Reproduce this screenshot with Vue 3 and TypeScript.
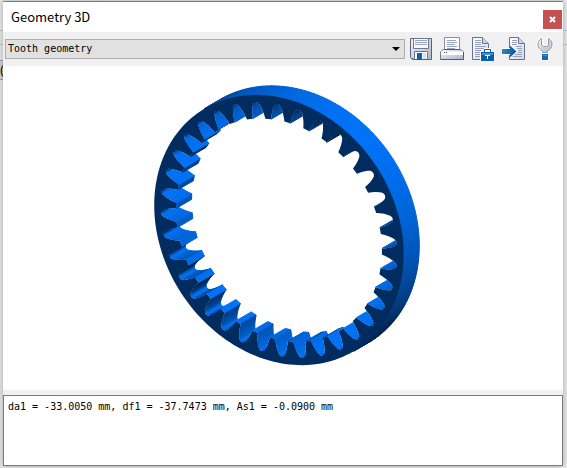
<script setup lang="ts">
import { ref } from 'vue'

interface Point { x: number; y: number }
interface Facet { points: string; fill: string; order: number }

const view = ref('Tooth geometry')
const views = ['Tooth geometry', 'Tooth system']
const report = ref('da1 = -33.0050 mm, df1 = -37.7473 mm, As1 = -0.0900 mm')

// Ring gear seen along a tilted axis: `major` and `minor` span the face plane,
// `depth` is the projected face width.
const centre: Point = { x: 276, y: 164 }
const major: Point = { x: 0.549, y: 0.836 }
const minor: Point = { x: 0.683, y: -0.449 }
const depth: Point = { x: 15.5, y: -9 }
const teeth = 35
const outerRadius = 142.4
const rootRadius = 134.8
const tipRadius = 117.5
const rad = Math.PI / 180

function project(angle: number, radius: number): Point {
  const a = angle * rad
  const c = Math.cos(a) * radius
  const s = Math.sin(a) * radius
  return { x: centre.x + c * major.x + s * minor.x, y: centre.y + c * major.y + s * minor.y }
}

function shade(normal: number): string {
  const light = Math.pow(Math.max(0, Math.cos((normal - 105) * rad)), 0.85)
  return `rgb(0, ${Math.round(38 + 76 * light)}, ${Math.round(82 + 164 * light)})`
}

function text(p: Point): string {
  return `${p.x.toFixed(2)},${p.y.toFixed(2)}`
}

function outline(points: Point[]): string {
  return `M${points.map(text).join('L')}Z`
}

// Builds the walls swept from the front outline; `side` selects outer or inner surfaces.
function walls(angles: number[], radii: number[], side: number): Facet[] {
  const result: Facet[] = []
  for (let i = 0; i < angles.length; i++) {
    const j = (i + 1) % angles.length
    const a = project(angles[i], radii[i])
    const b = project(angles[j], radii[j])
    const facing = ((b.x - a.x) * depth.y - (b.y - a.y) * depth.x) * side
    if (facing <= 0) continue
    const dx = radii[j] * Math.cos(angles[j] * rad) - radii[i] * Math.cos(angles[i] * rad)
    const dy = radii[j] * Math.sin(angles[j] * rad) - radii[i] * Math.sin(angles[i] * rad)
    const normal = Math.atan2(-dx * side, dy * side) / rad
    const quad = [a, b, { x: b.x + depth.x, y: b.y + depth.y }, { x: a.x + depth.x, y: a.y + depth.y }]
    result.push({
      points: quad.map(text).join(' '),
      fill: shade(normal),
      order: (a.x + b.x) * depth.x + (a.y + b.y) * depth.y
    })
  }
  return result.sort((p, q) => p.order - q.order)
}

const rimAngles = Array.from({ length: 180 }, (_, i) => i * 2)
const rimRadii = rimAngles.map(() => outerRadius)

const gap: [number, number][] = [
  [-0.35, 0], [-0.31, 0.25], [-0.26, 0.5], [-0.19, 0.75], [-0.13, 0.91], [-0.06, 0.98],
  [0, 1], [0.06, 0.98], [0.13, 0.91], [0.19, 0.75], [0.26, 0.5], [0.31, 0.25], [0.35, 0]
]
const toothAngles: number[] = []
const toothRadii: number[] = []
for (let k = 0; k < teeth; k++) {
  for (const [offset, height] of gap) {
    const angle = -24.8 + ((k + offset) * 360) / teeth
    toothAngles.push(angle - 2.8 * Math.cos(angle * rad))
    toothRadii.push(tipRadius + (rootRadius - tipRadius) * height)
  }
}

const rim = walls(rimAngles, rimRadii, 1)
const flanks = walls(toothAngles, toothRadii, -1)
const rimPath = outline(rimAngles.map((a) => project(a, outerRadius)))
const borePath = outline(toothAngles.map((a, i) => project(a, toothRadii[i])))
</script>

<template>
  <div class="desktop">
    <div class="behind" aria-hidden="true"></div>
    <div class="behind-field" aria-hidden="true">(</div>
    <main class="window">
      <header class="titlebar">
        <h1>Geometry 3D</h1>
        <button class="close" type="button" aria-label="Close">
          <svg viewBox="0 0 7 7" width="7" height="7"><path d="M1 1L6 6M6 1L1 6" stroke="#fff" stroke-width="2" /></svg>
        </button>
      </header>

      <div class="toolbar">
        <div class="picker">
          <select v-model="view" aria-label="View">
            <option v-for="v in views" :key="v">{{ v }}</option>
          </select>
          <svg class="arrow" viewBox="0 0 8 4" width="8" height="4"><path d="M0 0H8L4 4Z" /></svg>
        </div>

        <button class="tool" type="button" aria-label="Save">
          <svg viewBox="0 0 24 24" width="24" height="24">
            <path d="M1.500 1.500H22.500V22.500H3.500L1.500 20.500Z" fill="url(#metal)" stroke="#59627f" />
            <path d="M4.500 1.500H19.500V11.500H4.500Z" fill="#f8f9fd" stroke="#707991" />
            <path d="M6 3.500H18M6 5.500H18M6 7.500H18" stroke="#9ba3bd" />
            <path d="M5 14.500H19V22H5Z" fill="#fff" />
            <path d="M5.500 22V14.500H18.500V22" fill="none" stroke="#6b748e" />
            <path d="M8 16H13V23H8Z" fill="#0862ad" />
            <path d="M14 16H17V22H14Z" fill="#d9deeb" />
            <path d="M2 21H4V22H2Z" fill="#505976" />
          </svg>
        </button>
        <button class="tool" type="button" aria-label="Print">
          <svg viewBox="0 0 24 24" width="24" height="24">
            <path d="M4.500 14V.5H19.500V14" fill="#fcfcff" stroke="#8790aa" />
            <path d="M7 3.500H16M7 5.500H17M7 7.500H15M7 9.500H17M7 11.500H15" stroke="#9ca5bf" />
            <path d="M3 12.500H21L23.500 15V22.500H.5V15Z" fill="url(#metal)" stroke="#727b94" />
            <path d="M5 12H19V13H5Z" fill="#4e5874" />
            <path d="M1 14.500H23V18H1Z" fill="#fff" />
            <path d="M4 15.500H5M6 15.500H7" stroke="#485575" />
            <path d="M.5 22.500H23.500V15" fill="none" stroke="#545c72" />
          </svg>
        </button>
        <button class="tool" type="button" aria-label="Protected report">
          <svg viewBox="0 0 24 24" width="24" height="24">
            <path d="M1.500.5H11.500L17.500 6.500V22.500H1.500Z" fill="url(#paper)" stroke="#69728b" />
            <path d="M11.500.5V6.500H17.500" fill="#d2d6e4" stroke="#69728b" />
            <path d="M4 3.500H10M4 5.500H10M4 7.500H10M4 9.500H15M4 11.500H14M4 13.500H10M4 15.500H9M4 17.500H9M4 19.500H9" stroke="#98a1bb" />
            <path d="M9 14H13V11H20V14H24V24H9Z" fill="#fff" />
            <path d="M13.500 15V12.500H19.500V15" fill="none" stroke="#0862ad" />
            <path d="M10 15H23V24H10Z" fill="#075fa9" />
            <path d="M11 16H22V18H11Z" fill="#4c91cb" />
            <path d="M14 18H19V19H17V22H16V19H14Z" fill="#fff" />
          </svg>
        </button>
        <button class="tool" type="button" aria-label="Export">
          <svg viewBox="0 0 24 24" width="24" height="24">
            <path d="M7.500.5H16.500L22.500 6.500V22.500H7.500Z" fill="url(#paper)" stroke="#69728b" />
            <path d="M16.500.5V6.500H22.500" fill="#d2d6e4" stroke="#69728b" />
            <path d="M10 3.500H15M10 5.500H15M10 7.500H15M14 9.500H20M15 11.500H20M16 13.500H20M16 15.500H20M13 17.500H20M10 19.500H20" stroke="#98a1bb" />
            <path d="M0 11H8V7L15.500 14.500L8 22V18H0Z" fill="#fff" />
            <path d="M0 12H8V8.500L14.500 14.500L8 20.500V17H0Z" fill="url(#arrowBlue)" />
          </svg>
        </button>
        <button class="tool" type="button" aria-label="Settings">
          <svg viewBox="0 0 24 24" width="24" height="24">
            <path d="M9 1C3 3 3 12 9 14.500V15.500H15V14.500C21 12 21 3 15 1V8L13.500 9.500H10.500L9 8Z" fill="#fff" stroke="#fff" stroke-width="2" stroke-linejoin="round" />
            <path d="M8.500 1.500C3.500 4 3.500 11.500 9.500 14V15.500H14.500V14C20.500 11.500 20.500 4 15.500 1.500V8L13.500 9.500H10.500L8.500 8Z" fill="url(#metal)" stroke="#9299a9" />
            <path d="M8 16H16V24H8Z" fill="#fff" />
            <path d="M9 17H15V23H9Z" fill="#1268b1" />
            <path d="M10 18H14V19H10Z" fill="#4091ce" />
          </svg>
        </button>
      </div>

      <section class="canvas" aria-label="Ring gear">
        <svg viewBox="0 0 560 324" role="img" stroke-linejoin="round">
          <defs>
            <linearGradient id="metal" x1="0" y1="0" x2="1" y2="1">
              <stop offset="0" stop-color="#f5f6fb" />
              <stop offset="1" stop-color="#acb3ca" />
            </linearGradient>
            <linearGradient id="paper" x1="0" y1="0" x2="1" y2="1">
              <stop offset="0" stop-color="#fff" />
              <stop offset="1" stop-color="#d6daea" />
            </linearGradient>
            <linearGradient id="arrowBlue" x1="0" y1="0" x2="1" y2="0">
              <stop offset="0" stop-color="#2f82c3" />
              <stop offset="1" stop-color="#07569c" />
            </linearGradient>
            <clipPath id="bore"><path :d="borePath" /></clipPath>
          </defs>
          <polygon v-for="(f, i) in rim" :key="`r${i}`" :points="f.points" :fill="f.fill" :stroke="f.fill" stroke-width="1" />
          <path :d="rimPath" fill="#002c60" />
          <path :d="borePath" fill="#fff" />
          <g clip-path="url(#bore)">
            <polygon v-for="(f, i) in flanks" :key="`f${i}`" :points="f.points" :fill="f.fill" :stroke="f.fill" stroke-width="1" />
          </g>
        </svg>
      </section>

      <textarea v-model="report" class="report" aria-label="Geometry values" spellcheck="false" readonly></textarea>
    </main>
  </div>
</template>

<style>
body {
  background: #e8e8e8;
}
</style>

<style scoped>
.desktop {
  position: relative;
  box-sizing: border-box;
  height: 100vh;
  padding: 1px 4px 2px 3px;
  overflow: hidden;
  background: #e8e8e8;
}

.behind {
  position: absolute;
  top: 30px;
  left: 0;
  right: 0;
  height: 13px;
  border-top: 1px solid #c4c4c4;
  border-bottom: 1px solid #c4c4c4;
}

.behind-field {
  position: absolute;
  top: 60px;
  left: 0;
  width: 20px;
  height: 18px;
  border-top: 1px solid #a0a0a0;
  border-bottom: 1px solid #a0a0a0;
  background: #d0d0d0;
  font: 12px/18px "Liberation Sans", sans-serif;
}

.window {
  position: relative;
  display: flex;
  flex-direction: column;
  box-sizing: border-box;
  height: 100%;
  border-top: 1px solid #2a9fb8;
  background: #f0f0f0;
  box-shadow: 0 0 6px rgba(0, 0, 0, 0.3);
}

.titlebar {
  display: flex;
  align-items: center;
  justify-content: space-between;
  height: 30px;
  padding: 0 1px 0 8px;
  background: #fff;
}

h1 {
  margin: 0;
  font: 13px/18px "Noto Sans CJK SC", sans-serif;
  color: #000;
}

.close {
  display: flex;
  align-items: center;
  justify-content: center;
  width: 19px;
  height: 19px;
  margin-top: 4px;
  padding: 0;
  border: 0;
  background: #c75050;
}

.toolbar {
  display: flex;
  align-items: center;
  height: 34px;
  padding: 0 3px 0 2px;
}

.picker {
  position: relative;
  flex: 1;
  display: flex;
}

select {
  flex: 1;
  height: 20px;
  padding: 0 20px 0 2px;
  border: 1px solid #adadad;
  border-radius: 0;
  appearance: none;
  background: #e1e1e1;
  color: #000;
  font: 10px/16px "DejaVu Sans Mono", monospace;
}

.arrow {
  position: absolute;
  top: 8px;
  right: 5px;
  pointer-events: none;
}

.tool {
  display: flex;
  align-items: center;
  justify-content: center;
  width: 31px;
  height: 32px;
  padding: 0;
  border: 0;
  background: transparent;
}

.canvas {
  flex: 1;
  min-height: 0;
  margin-bottom: 5px;
  background: #fff;
}

.canvas svg {
  display: block;
  width: 100%;
  height: 100%;
}

.report {
  box-sizing: border-box;
  width: 100%;
  height: 71px;
  margin: 0;
  padding: 3px 4px;
  border: 1px solid #7a7a7a;
  border-radius: 0;
  outline: 0;
  resize: none;
  background: #fff;
  color: #000;
  font: 10px/16px "DejaVu Sans Mono", monospace;
}
</style>
